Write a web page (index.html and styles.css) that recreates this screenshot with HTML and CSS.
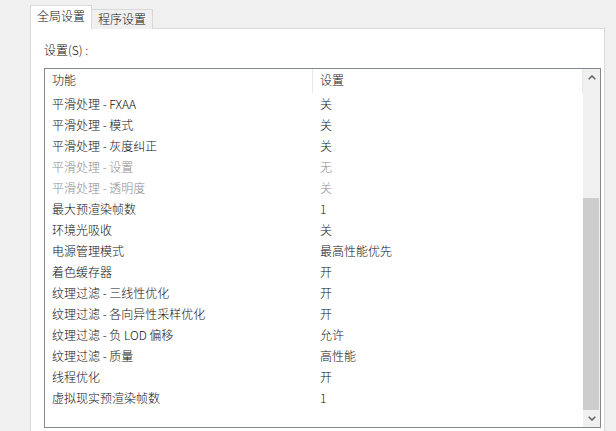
FILE: index.html
```html
<!DOCTYPE html>
<html lang="zh-CN">
<head>
    <meta charset="UTF-8">
    <title>管理 3D 设置</title>
    <link rel="stylesheet" href="styles.css">
</head>
<body>
    <div class="window">
        <div class="tabs">
            <div class="tab active">全局设置</div>
            <div class="tab">程序设置</div>
        </div>

        <div class="panel">
            <div class="label">设置(S)&nbsp;:</div>

            <div class="listbox">
                <div class="list">
                    <div class="head">
                        <div class="col-name">功能</div>
                        <div class="col-value">设置</div>
                    </div>

                    <div class="row"><div class="col-name">平滑处理 - FXAA</div><div class="col-value">关</div></div>
                    <div class="row"><div class="col-name">平滑处理 - 模式</div><div class="col-value">关</div></div>
                    <div class="row"><div class="col-name">平滑处理 - 灰度纠正</div><div class="col-value">关</div></div>
                    <div class="row disabled"><div class="col-name">平滑处理 - 设置</div><div class="col-value">无</div></div>
                    <div class="row disabled"><div class="col-name">平滑处理 - 透明度</div><div class="col-value">关</div></div>
                    <div class="row"><div class="col-name">最大预渲染帧数</div><div class="col-value">1</div></div>
                    <div class="row"><div class="col-name">环境光吸收</div><div class="col-value">关</div></div>
                    <div class="row"><div class="col-name">电源管理模式</div><div class="col-value">最高性能优先</div></div>
                    <div class="row"><div class="col-name">着色缓存器</div><div class="col-value">开</div></div>
                    <div class="row"><div class="col-name">纹理过滤 - 三线性优化</div><div class="col-value">开</div></div>
                    <div class="row"><div class="col-name">纹理过滤 - 各向异性采样优化</div><div class="col-value">开</div></div>
                    <div class="row"><div class="col-name">纹理过滤 - 负 LOD 偏移</div><div class="col-value">允许</div></div>
                    <div class="row"><div class="col-name">纹理过滤 - 质量</div><div class="col-value">高性能</div></div>
                    <div class="row"><div class="col-name">线程优化</div><div class="col-value">开</div></div>
                    <div class="row"><div class="col-name">虚拟现实预渲染帧数</div><div class="col-value">1</div></div>
                </div>

                <!-- 滚动条 -->
                <div class="scrollbar">
                    <div class="arrow">
                        <svg width="8" height="5" viewBox="0 0 8 5"><path d="M0.7 4.3 L4 1 L7.3 4.3" fill="none" stroke="#606060" stroke-width="1.5"/></svg>
                    </div>
                    <div class="track">
                        <div class="thumb"></div>
                    </div>
                    <div class="arrow">
                        <svg width="8" height="5" viewBox="0 0 8 5"><path d="M0.7 0.7 L4 4 L7.3 0.7" fill="none" stroke="#606060" stroke-width="1.5"/></svg>
                    </div>
                </div>
            </div>
        </div>
    </div>
</body>
</html>
```

FILE: styles.css
```css
* {
    margin: 0;
    padding: 0;
    box-sizing: border-box;
}
body {
    width: 616px;
    height: 431px;
    overflow: hidden;
    background: #f0f0f0;
    font-family: "Noto Sans CJK SC", "Noto Sans", sans-serif;
    font-size: 12px;
    font-weight: 300;
    color: #111;
}
.window {
    padding: 5px 11px 0 30px;
}

/* 标签页 */
.tabs {
    display: flex;
    align-items: flex-end;
    height: 24px;
    position: relative;
    z-index: 1;
}
.tab {
    height: 20px;
    padding: 0 6px;
    line-height: 18px;
    border: 1px solid #d9d9d9;
    border-bottom: none;
    border-left: none;
    background: #f0f0f0;
}
.tab.active {
    height: 24px;
    padding: 0 6px;
    line-height: 20px;
    border-left: 1px solid #d9d9d9;
    background: #fff;
    width: 62px;
}

/* 面板 */
.panel {
    margin-top: -1px;
    height: 420px;
    background: #fff;
    border: 1px solid #d9d9d9;
    padding: 13px 3px 0 13px;
}
.label {
    line-height: 16px;
    margin-bottom: 10px;
}

/* 列表 */
.listbox {
    display: flex;
    width: 557px;
    height: 360px;
    border: 1px solid #828790;
    background: #fff;
}
.list {
    flex: 1;
    overflow: hidden;
}
.head,
.row {
    display: flex;
}
.head {
    height: 24px;
    line-height: 22px;
}
.head .col-name {
    border-right: 1px solid #e8e8e8;
}
.head .col-value {
    border-right: 1px solid #e8e8e8;
    flex: 1;
}
.row {
    height: 21px;
    line-height: 21px;
}
.col-name {
    width: 268px;
    padding-left: 7px;
    white-space: nowrap;
}
.col-value {
    padding-left: 7px;
    white-space: nowrap;
}
.row.disabled {
    color: #8d8d8d;
}

/* 滚动条 */
.scrollbar {
    width: 17px;
    display: flex;
    flex-direction: column;
    background: #f0f0f0;
}
.arrow {
    height: 17px;
    display: flex;
    align-items: center;
    justify-content: center;
}
.track {
    flex: 1;
    display: flex;
    flex-direction: column;
    justify-content: flex-end;
}
.thumb {
    height: 212px;
    margin-right: 1px;
    background: #cdcdcd;
}
```
